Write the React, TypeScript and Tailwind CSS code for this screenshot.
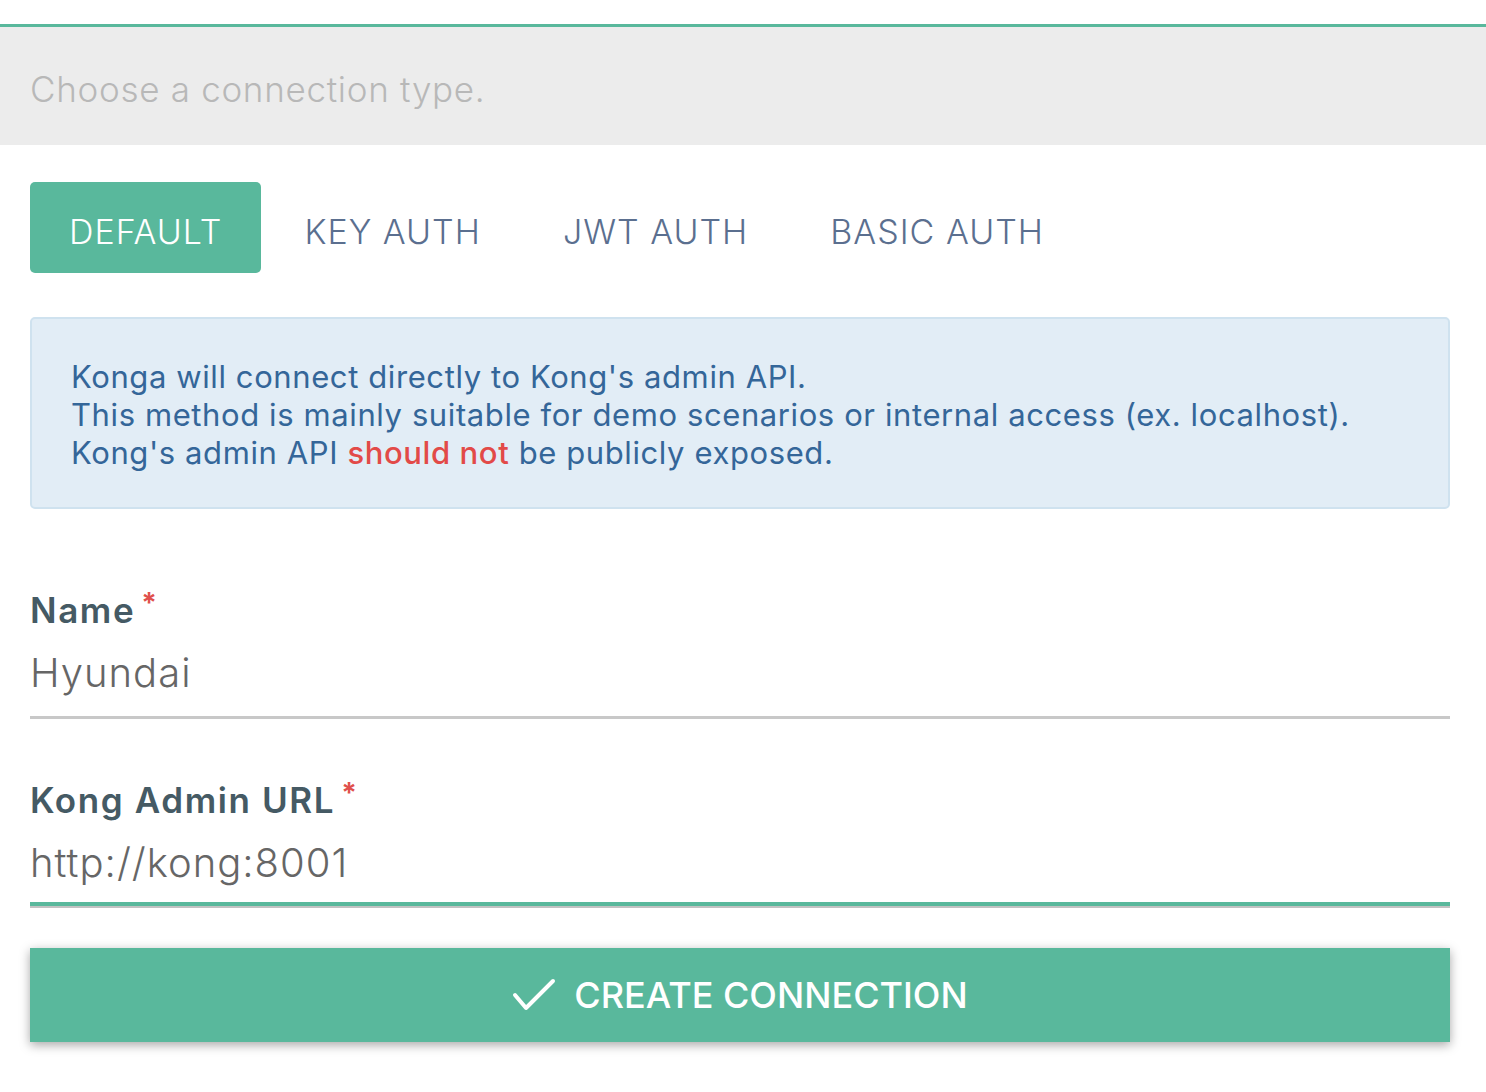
const tabs = ["DEFAULT", "KEY AUTH", "JWT AUTH", "BASIC AUTH"];

function Field({
  label,
  value,
  focused,
  className,
}: {
  label: string;
  value: string;
  focused?: boolean;
  className?: string;
}) {
  return (
    <div className={className}>
      <div className="h-[40px] text-[35px] leading-[40px] font-semibold text-[#455a64] tracking-[1.6px]">
        {label}
        <span className="relative -top-[10px] ml-[6px] text-[28px] font-bold text-[#e0504c]">*</span>
      </div>
      <div
        className={`pt-[19px] text-[40px] leading-[48px] font-light text-[#666666] tracking-[1px] ${
          focused
            ? "pb-[15px] border-b-4 border-[#59b89c] shadow-[0_2px_0_#c2c2c2]"
            : "pb-[19px] border-b-[3px] border-[#c8c8c8]"
        }`}
      >
        {value}
      </div>
    </div>
  );
}

export default function App() {
  return (
    <main className="min-h-screen bg-white pt-6 font-['Inter',sans-serif]">
      <div className="flex h-[121px] items-center border-t-[3px] border-[#59b89c] bg-[#ececec] px-[30px]">
        <span className="pt-[6px] text-[35px] font-light text-[#b8b8b8] tracking-[0.7px]">
          Choose a connection type.
        </span>
      </div>

      <div className="pl-[30px] pr-[36px]">
        <div className="mt-[37px] flex gap-1">
          {tabs.map((tab, i) => (
            <div
              key={tab}
              className={`flex h-[91px] items-center rounded-[5px] px-[39px] pt-[7px] text-[34px] font-light tracking-[1px] ${
                i === 0 ? "bg-[#59b89c] text-white" : "text-[#5b6f8f]"
              }`}
            >
              {tab}
            </div>
          ))}
        </div>

        <div className="mt-[44px] h-[192px] rounded-[5px] border-2 border-[#cfe2ef] bg-[#e2edf6] px-[39px] pt-[39px] text-[31px] leading-[38px] tracking-[0.6px] text-[#346699]">
          <div>Konga will connect directly to Kong's admin API.</div>
          <div>This method is mainly suitable for demo scenarios or internal access (ex. localhost).</div>
          <div>
            Kong's admin API <span className="font-medium text-[#e24a48]">should not</span> be publicly exposed.
          </div>
        </div>

        <Field className="mt-[81px]" label="Name" value="Hyundai" />
        <Field className="mt-[61px]" label="Kong Admin URL" value="http://kong:8001" focused />

        <button className="mt-[42px] flex h-[94px] w-full items-center justify-center gap-[18px] bg-[#59b89c] text-[36px] font-medium tracking-[0px] text-white shadow-[0_3px_10px_rgba(0,0,0,0.35)]">
          <svg width="44" height="34" viewBox="0 0 44 34" fill="none" stroke="currentColor" strokeWidth="4" strokeLinecap="round" strokeLinejoin="round">
            <polyline points="3,17 14,30 41,3" />
          </svg>
          CREATE CONNECTION
        </button>
      </div>
    </main>
  );
}
